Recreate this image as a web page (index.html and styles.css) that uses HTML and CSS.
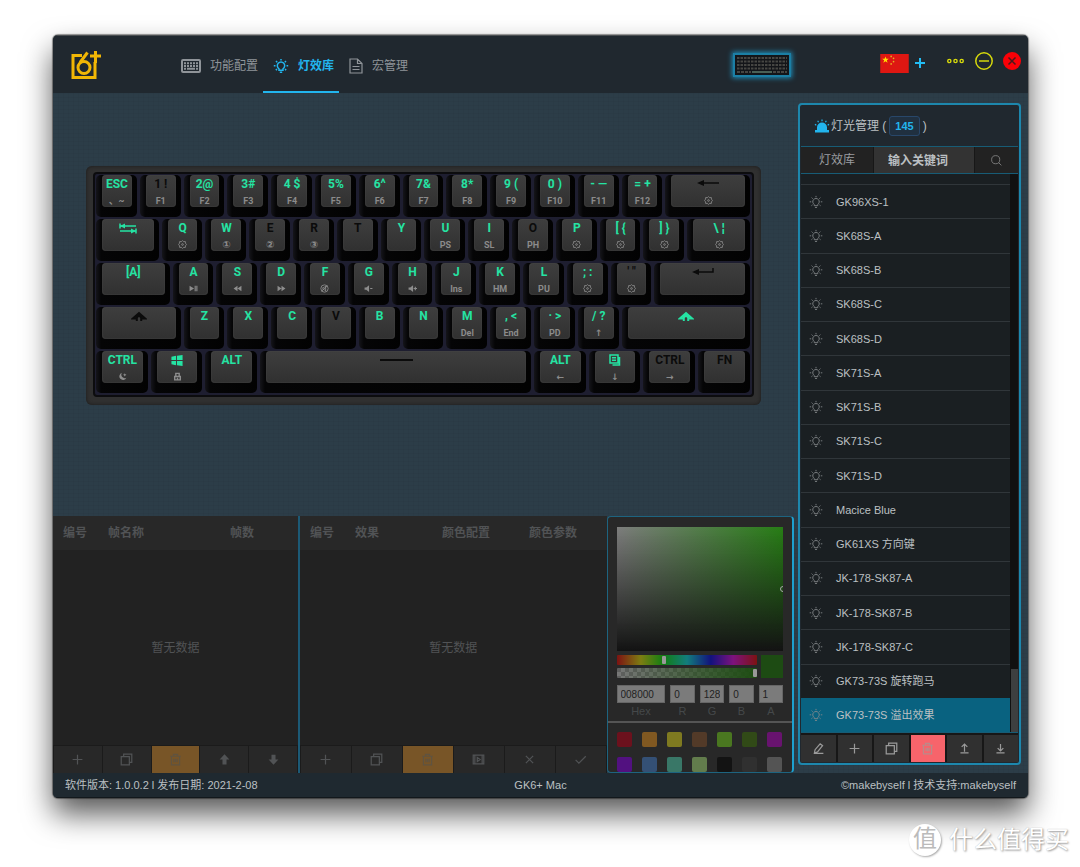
FILE: index.html
```html
<!DOCTYPE html>
<html lang="zh-CN">
<head>
<meta charset="utf-8">
<title>GK6+ Mac</title>
<link rel="stylesheet" href="styles.css">
</head>
<body>
<svg class="defs" aria-hidden="true">
  <symbol id="bulb" viewBox="0 0 16 16"><path d="M6 12.200v-1.400a3.700 3.700 0 1 1 4 0v1.400zM6.800 14.200h2.400M8 1v1.600M3 3l1.200 1.200M13 3l-1.200 1.200M.8 7.800h1.700M13.500 7.800h1.700M2.800 12.200l1.200-1M13.200 12.200l-1.200-1"/></symbol>
  <symbol id="plus" viewBox="0 0 16 16"><path d="M8 2v12M2 8h12"/></symbol>
  <symbol id="copy" viewBox="0 0 16 16"><path d="M1.500 4.500h10v10h-10zM4.500 4V1.500h10v10h-2.500"/></symbol>
  <symbol id="trash" viewBox="0 0 16 16"><path d="M1.500 4h13M5.500 4V1.800h5V4M3 4v10.500h10V4M6 7v4.500M8 7v4.500M10 7v4.500"/></symbol>
  <symbol id="gear" viewBox="0 0 16 16"><path d="M8 1l2 2 3-.3.300 3L15 8l-1.700 2.300-.3 3-3-.3-2 2-2-2-3 .3-.3-3L1 8l1.700-2.300.3-3 3 .3z"/><circle cx="8" cy="8" r="1.500"/></symbol>
  <symbol id="shift" viewBox="0 0 16 12"><path d="M5 8H1.800L8 2.500 14.200 8H11M5.800 10.500V7L8 5l2.200 2v3.500"/></symbol>
</svg>

<div class="window">
  <header class="topbar">
    <svg class="logo" viewBox="0 0 30 30" aria-label="GK6+"><path d="M11 5.500H2v22h22V12M24.500 1v12M19 6h11" /><path d="M16.500 2.500L9 12.500"/><circle cx="13" cy="17.500" r="6"/></svg>
    <nav class="tabs">
      <a href="#config"><svg class="kb-ico" viewBox="0 0 20 14"><rect x="1" y="1" width="18" height="12" rx="1"/><path d="M3 4.200h14M3 7h14" stroke-dasharray="2 1"/><path d="M3 9.800h2M6 9.800h8M15 9.800h2"/></svg><span>功能配置</span></a>
      <a href="#lights" class="active"><svg class="bulb-ico"><use href="#bulb"/></svg><span>灯效库</span></a>
      <a href="#macro"><svg class="doc-ico" viewBox="0 0 14 16"><path d="M1 1h7.500L13 5.500V15H1zM8.500 1v4.500H13M3.500 8.500h7M3.500 11.500h7"/></svg><span>宏管理</span></a>
    </nav>
    <button class="device" aria-label="键盘"><svg viewBox="0 0 54 20"><rect width="54" height="20" fill="#131519"/><path d="M2 3h50M2 6.500h50M2 10h50M2 13.500h50" stroke="#464643" stroke-width="2.200" stroke-dasharray="2.500 1"/><path d="M2 17h14M38 17h14" stroke="#464643" stroke-width="2" stroke-dasharray="3 1"/><path d="M17 17h20" stroke="#4a6055" stroke-width="2"/></svg></button>
    <div class="lang">
      <svg class="flag" viewBox="0 0 30 20" aria-label="中国"><rect width="30" height="20" fill="#de1712"/><path fill="#ffde00" d="M5.500 2.500l.9 2.500H9L6.900 6.600l.8 2.500-2.200-1.500-2.200 1.500.8-2.500L2 5h2.600z"/><g fill="#e8b020"><circle cx="11.500" cy="2.500" r=".9"/><circle cx="14" cy="4.500" r=".9"/><circle cx="14" cy="8" r=".9"/><circle cx="11.500" cy="10.500" r=".9"/></g></svg>
      <button aria-label="添加"><svg viewBox="0 0 12 12"><path d="M6 1v10M1 6h10" stroke="#22bdf5" stroke-width="2"/></svg></button>
    </div>
    <div class="winctl">
      <button aria-label="更多"><svg class="dots" viewBox="0 0 20 8"><g fill="none" stroke="#d5d80c" stroke-width="1.500"><circle cx="3.500" cy="4" r="1.700"/><circle cx="10" cy="4" r="1.700"/><circle cx="16.500" cy="4" r="1.700"/></g></svg></button>
      <button aria-label="最小化"><svg viewBox="0 0 18 18"><g fill="none" stroke="#d5d80c" stroke-width="1.500"><circle cx="9" cy="9" r="8.200"/><path d="M4 9h10"/></g></svg></button>
      <button aria-label="关闭"><svg class="solid" viewBox="0 0 18 18"><circle cx="9" cy="9" r="9" fill="#fb0007"/><path d="M5.500 5.500l7 7M12.500 5.500l-7 7" stroke="#4a1a1c" stroke-width="1.500"/></svg></button>
    </div>
  </header>

  <main class="content">
    <section class="work">
      <div class="stage">
        <div class="keyboard"><div class="keys">
          <div class="key"><div class="cap"><b>ESC</b><small>、~</small></div></div>
          <div class="key off"><div class="cap"><b>1 !</b><small>F1</small></div></div>
          <div class="key"><div class="cap"><b>2@</b><small>F2</small></div></div>
          <div class="key"><div class="cap"><b>3#</b><small>F3</small></div></div>
          <div class="key"><div class="cap"><b>4 $</b><small>F4</small></div></div>
          <div class="key"><div class="cap"><b>5%</b><small>F5</small></div></div>
          <div class="key"><div class="cap"><b>6^</b><small>F6</small></div></div>
          <div class="key"><div class="cap"><b>7&amp;</b><small>F7</small></div></div>
          <div class="key"><div class="cap"><b>8*</b><small>F8</small></div></div>
          <div class="key"><div class="cap"><b>9 (</b><small>F9</small></div></div>
          <div class="key"><div class="cap"><b>0 )</b><small>F10</small></div></div>
          <div class="key"><div class="cap"><b>- —</b><small>F11</small></div></div>
          <div class="key"><div class="cap"><b>= +</b><small>F12</small></div></div>
          <div class="key u200 off"><div class="cap"><svg class="wide" viewBox="0 0 22 12"><path d="M4 5h18" /><path class="fill" d="M0 5l7-3v6z"/></svg><svg class="sub"><use href="#gear"/></svg></div></div>

          <div class="key u150"><div class="cap"><svg class="wide" viewBox="0 0 22 12"><path d="M3 4h16M3 9h16M3 1.500v5M19 6.500v5"/><path class="fill" d="M3 4l5-2.500v5zM19 9l-5-2.500v5z"/></svg></div></div>
          <div class="key"><div class="cap"><b>Q</b><svg class="sub"><use href="#gear"/></svg></div></div>
          <div class="key"><div class="cap"><b>W</b><small class="num">①</small></div></div>
          <div class="key off"><div class="cap"><b>E</b><small class="num">②</small></div></div>
          <div class="key off"><div class="cap"><b>R</b><small class="num">③</small></div></div>
          <div class="key off"><div class="cap"><b>T</b></div></div>
          <div class="key"><div class="cap"><b>Y</b></div></div>
          <div class="key"><div class="cap"><b>U</b><small>PS</small></div></div>
          <div class="key"><div class="cap"><b>I</b><small>SL</small></div></div>
          <div class="key off"><div class="cap"><b>O</b><small>PH</small></div></div>
          <div class="key"><div class="cap"><b>P</b><svg class="sub"><use href="#gear"/></svg></div></div>
          <div class="key"><div class="cap"><b>[ {</b><svg class="sub"><use href="#gear"/></svg></div></div>
          <div class="key"><div class="cap"><b>] }</b><svg class="sub"><use href="#gear"/></svg></div></div>
          <div class="key u150"><div class="cap"><b>\ ¦</b><svg class="sub"><use href="#gear"/></svg></div></div>

          <div class="key u175"><div class="cap"><b>[A]</b></div></div>
          <div class="key"><div class="cap"><b>A</b><svg class="sub solid" viewBox="0 0 16 16"><path d="M1 3l8 5-8 5zM10 3h2v10h-2zM13 3h2v10h-2z"/></svg></div></div>
          <div class="key"><div class="cap"><b>S</b><svg class="sub solid" viewBox="0 0 16 16"><path d="M8 3v10L1 8zM15 3v10L8 8z"/></svg></div></div>
          <div class="key"><div class="cap"><b>D</b><svg class="sub solid" viewBox="0 0 16 16"><path d="M1 3v10l7-5zM8 3v10l7-5z"/></svg></div></div>
          <div class="key"><div class="cap"><b>F</b><svg class="sub" viewBox="0 0 16 16"><circle cx="8" cy="8" r="6.500"/><path d="M5 6.500h2l3-3v9l-3-3H5zM3 13L13 3"/></svg></div></div>
          <div class="key"><div class="cap"><b>G</b><svg class="sub solid" viewBox="0 0 16 16"><path d="M1 6h3l5-4v12l-5-4H1zM11 7h4v2h-4z"/></svg></div></div>
          <div class="key"><div class="cap"><b>H</b><svg class="sub solid" viewBox="0 0 16 16"><path d="M1 6h3l5-4v12l-5-4H1zM10 7h2V5h2v2h2v2h-2v2h-2V9h-2z"/></svg></div></div>
          <div class="key"><div class="cap"><b>J</b><small>Ins</small></div></div>
          <div class="key"><div class="cap"><b>K</b><small>HM</small></div></div>
          <div class="key"><div class="cap"><b>L</b><small>PU</small></div></div>
          <div class="key"><div class="cap"><b>; :</b><svg class="sub"><use href="#gear"/></svg></div></div>
          <div class="key off"><div class="cap"><b>' "</b><svg class="sub"><use href="#gear"/></svg></div></div>
          <div class="key u225 off"><div class="cap"><svg class="wide" viewBox="0 0 22 12"><path d="M4 6h17V2" /><path class="fill" d="M0 6l7-3v6z"/></svg></div></div>

          <div class="key u200 off"><div class="cap"><svg class="shift"><use href="#shift"/></svg></div></div>
          <div class="key"><div class="cap"><b>Z</b></div></div>
          <div class="key"><div class="cap"><b>X</b></div></div>
          <div class="key"><div class="cap"><b>C</b></div></div>
          <div class="key off"><div class="cap"><b>V</b></div></div>
          <div class="key"><div class="cap"><b>B</b></div></div>
          <div class="key"><div class="cap"><b>N</b></div></div>
          <div class="key"><div class="cap"><b>M</b><small>Del</small></div></div>
          <div class="key"><div class="cap"><b>, &lt;</b><small>End</small></div></div>
          <div class="key"><div class="cap"><b>· &gt;</b><small>PD</small></div></div>
          <div class="key"><div class="cap"><b>/ ?</b><small>↑</small></div></div>
          <div class="key u300"><div class="cap"><svg class="shift"><use href="#shift"/></svg></div></div>

          <div class="key u125"><div class="cap"><b>CTRL</b><svg class="sub solid" viewBox="0 0 16 16"><path d="M7 1.500a6.500 6.500 0 1 0 8 8.500A6 6 0 0 1 7 1.500zM12 2l1 2 2 1-2 1-1 2-1-2-2-1 2-1z"/></svg></div></div>
          <div class="key u125"><div class="cap"><svg class="shift solid" viewBox="0 0 16 14"><path d="M2 3l5-1v4.500H2zM8 2l6-1v5.500H8zM2 7.500h5V12l-5-1zM8 7.500h6V13l-6-1z"/></svg><svg class="sub" viewBox="0 0 16 16"><path d="M3 8h10v6H3zM5 8V2.500h6V8M8 10v3" stroke-width="2.500"/></svg></div></div>
          <div class="key u125"><div class="cap"><b>ALT</b></div></div>
          <div class="key u625 off"><div class="cap"><span class="bar"></span></div></div>
          <div class="key u125"><div class="cap"><b>ALT</b><small>←</small></div></div>
          <div class="key u125"><div class="cap"><svg class="menu" viewBox="0 0 12 12"><path d="M1 1h8v8H1zM3 3.700h4M3 6.300h4M10.500 3v8H3.500"/></svg><small>↓</small></div></div>
          <div class="key u125 off"><div class="cap"><b>CTRL</b><small>→</small></div></div>
          <div class="key u125 off"><div class="cap"><b>FN</b></div></div>
        </div></div>
      </div>

      <div class="editors">
        <section class="pane frames">
          <table><thead><tr><th class="no">编号</th><th class="name">帧名称</th><th>帧数</th></tr></thead></table>
          <p class="empty">暂无数据</p>
          <div class="tools">
            <button aria-label="添加"><svg><use href="#plus"/></svg></button>
            <button aria-label="复制"><svg><use href="#copy"/></svg></button>
            <button class="warn" aria-label="删除"><svg><use href="#trash"/></svg></button>
            <button aria-label="上移"><svg class="solid" viewBox="0 0 16 16"><path d="M8 1.500L14 8h-3.500v6h-5V8H2z"/></svg></button>
            <button aria-label="下移"><svg class="solid" viewBox="0 0 16 16"><path d="M8 14.500L14 8h-3.500V2h-5v6H2z"/></svg></button>
          </div>
        </section>
        <section class="pane effects">
          <table><thead><tr><th class="no">编号</th><th class="fx">效果</th><th class="fx">颜色配置</th><th>颜色参数</th></tr></thead></table>
          <p class="empty">暂无数据</p>
          <div class="tools">
            <button aria-label="添加"><svg><use href="#plus"/></svg></button>
            <button aria-label="复制"><svg><use href="#copy"/></svg></button>
            <button class="warn" aria-label="删除"><svg><use href="#trash"/></svg></button>
            <button aria-label="预览"><svg viewBox="0 0 16 16"><path d="M1.500 2.500h13v11h-13zM3.500 2.500v11M12.500 2.500v11M6.500 5.500l3.500 2.500-3.500 2.500z"/></svg></button>
            <button aria-label="取消"><svg viewBox="0 0 16 16"><path d="M3.500 3.500l9 9M12.500 3.500l-9 9"/></svg></button>
            <button aria-label="确定"><svg viewBox="0 0 16 16"><path d="M2 8.500l4 4 8.500-8.500"/></svg></button>
          </div>
        </section>
        <section class="picker">
          <div class="mixer">
            <div class="shade"><span class="spot"></span></div>
            <div class="sliders">
              <div class="bars">
                <input class="hue" type="range" min="0" max="360" value="120" aria-label="色相">
                <input class="alpha" type="range" min="0" max="100" value="100" aria-label="透明度">
              </div>
              <span class="current"></span>
            </div>
            <div class="fields">
              <label><input value="008000">Hex</label>
              <label><input value="0">R</label>
              <label><input value="128">G</label>
              <label><input value="0">B</label>
              <label><input value="1">A</label>
            </div>
          </div>
          <div class="swatches">
            <button class="c1" aria-label="红"></button><button class="c2" aria-label="橙"></button><button class="c3" aria-label="黄"></button><button class="c4" aria-label="棕"></button><button class="c5" aria-label="绿"></button><button class="c6" aria-label="深绿"></button><button class="c7" aria-label="紫"></button>
            <button class="c8" aria-label="蓝紫"></button><button class="c9" aria-label="蓝"></button><button class="c10" aria-label="青"></button><button class="c11" aria-label="浅绿"></button><button class="c12" aria-label="黑"></button><button class="c13" aria-label="深灰"></button><button class="c14" aria-label="灰"></button>
          </div>
        </section>
      </div>
    </section>

    <aside class="library">
      <h2><svg class="siren" viewBox="0 0 16 14"><path d="M3 11V8.500a5 5 0 0 1 10 0V11zM1 11h14V13.500H1z"/><path d="M2.300 6.200L1 5.200M4.500 3.200l-.8-1.500M8 2.200V.5M11.500 3.200l.8-1.500M13.700 6.200l1.300-1" stroke-width="1.200"/></svg>灯光管理 (<span class="count">145</span>)</h2>
      <div class="filter">
        <span class="cat">灯效库</span>
        <input aria-label="搜索" placeholder="输入关键词">
        <button aria-label="搜索"><svg viewBox="0 0 16 16"><circle cx="7" cy="7" r="5"/><path d="M10.700 10.700L14 14"/></svg></button>
      </div>
      <div class="scroller">
        <ul>
          <li><svg><use href="#bulb"/></svg>GK96XS-1</li>
          <li><svg><use href="#bulb"/></svg>SK68S-A</li>
          <li><svg><use href="#bulb"/></svg>SK68S-B</li>
          <li><svg><use href="#bulb"/></svg>SK68S-C</li>
          <li><svg><use href="#bulb"/></svg>SK68S-D</li>
          <li><svg><use href="#bulb"/></svg>SK71S-A</li>
          <li><svg><use href="#bulb"/></svg>SK71S-B</li>
          <li><svg><use href="#bulb"/></svg>SK71S-C</li>
          <li><svg><use href="#bulb"/></svg>SK71S-D</li>
          <li><svg><use href="#bulb"/></svg>Macice Blue</li>
          <li><svg><use href="#bulb"/></svg>GK61XS 方向键</li>
          <li><svg><use href="#bulb"/></svg>JK-178-SK87-A</li>
          <li><svg><use href="#bulb"/></svg>JK-178-SK87-B</li>
          <li><svg><use href="#bulb"/></svg>JK-178-SK87-C</li>
          <li><svg><use href="#bulb"/></svg>GK73-73S 旋转跑马</li>
          <li class="selected"><svg><use href="#bulb"/></svg>GK73-73S 溢出效果</li>
        </ul>
        <div class="track"><span class="thumb"></span></div>
      </div>
      <div class="tools">
        <button aria-label="编辑"><svg viewBox="0 0 16 16"><path d="M3 13.500l.8-4L10 2.200l3 2.300-6 7.500zM3 14h11"/></svg></button>
        <button aria-label="添加"><svg><use href="#plus"/></svg></button>
        <button aria-label="复制"><svg><use href="#copy"/></svg></button>
        <button class="danger" aria-label="删除"><svg><use href="#trash"/></svg></button>
        <button aria-label="导出"><svg viewBox="0 0 16 16"><path d="M8 12V3M4.500 6L8 2.500 11.500 6M3 13.500h10"/></svg></button>
        <button aria-label="导入"><svg viewBox="0 0 16 16"><path d="M8 2.500v8M4.500 7.500L8 11l3.500-3.500M3 13.500h10"/></svg></button>
      </div>
    </aside>
  </main>

  <footer class="status">
    <span>软件版本: 1.0.0.2 l 发布日期: 2021-2-08</span>
    <span>GK6+ Mac</span>
    <span>©makebyself l 技术支持:makebyself</span>
  </footer>
</div>
<div class="watermark"><span class="seal">值</span>什么值得买</div>
</body>
</html>
```
FILE: styles.css
```css
* { box-sizing: border-box; }
body {
  margin: 0;
  min-height: 100vh;
  padding: 35px 52px 69px 53px;
  display: flex;
  position: relative;
  overflow: hidden;
  background: #fff;
  font: 12px/16px "Liberation Sans", "Noto Sans CJK SC", sans-serif;
  color: #bcc0c3;
}
svg { fill: none; stroke: currentColor; display: block; flex: none; }
.solid { fill: currentColor; stroke: none; }
button { border: 0; padding: 0; background: none; color: inherit; display: flex; align-items: center; justify-content: center; }
.defs { position: absolute; width: 0; height: 0; }

.window {
  flex: 1;
  min-width: 0;
  display: flex;
  flex-direction: column;
  border-radius: 5px;
  overflow: hidden;
  background:
    repeating-linear-gradient(0deg, rgba(0,0,0,.03) 0 1px, transparent 1px 4px),
    repeating-linear-gradient(90deg, rgba(0,0,0,.03) 0 1px, transparent 1px 5px),
    #2c3d48;
  box-shadow: 0 0 1px 1px rgba(0,0,0,.4), 0 16px 30px rgba(0,0,0,.66);
}

/* top bar */
.topbar { height: 58px; padding: 0 7px 0 18px; display: flex; background: #20282f; border-top: 1px solid #4a4e51; }
.topbar button svg { width: 18px; height: 18px; }
.logo { width: 30px; height: 30px; margin-top: 14px; color: #f2b705; stroke-width: 3; }
.tabs { display: flex; margin-left: 70px; flex: 1; }
.tabs a { display: flex; align-items: center; gap: 9px; padding: 4px 5px 0 10px; color: #8f9499; text-decoration: none; border-bottom: 2px solid transparent; }
.tabs a.active { color: #22b5ee; border-color: #22b5ee; font-weight: bold; }
.kb-ico { width: 20px; height: 14px; stroke-width: 2; }
.bulb-ico { width: 16px; height: 16px; stroke-width: 1.500; }
.doc-ico { width: 14px; height: 16px; stroke-width: 1.200; }
.device { width: 58px; height: 24px; margin: 17px 89px 0 0; border: 2px solid #1b7fa5; box-shadow: 0 0 5px 1px #1f8db8; }
.topbar .device svg { width: 54px; height: 20px; stroke: none; }
.lang { display: flex; align-items: center; height: 20px; margin-top: 17px; gap: 5px; }
.flag { width: 29px; height: 19px; stroke: none; }
.topbar .lang button svg { width: 12px; height: 12px; }
.winctl { display: flex; align-items: center; height: 18px; margin: 16px 0 0 20px; gap: 10px; }
.topbar .dots { width: 19px; height: 8px; }

/* layout */
.content { flex: 1; display: flex; gap: 4px; padding-right: 7px; min-height: 0; }
.work { flex: 1; min-width: 0; display: flex; flex-direction: column; }
.stage { flex: 1; padding: 73px 33px 0; }

/* keyboard */
.keyboard { padding: 6px 7px 8px; border-radius: 6px; background: #303030; box-shadow: inset 0 0 3px 1px #222; }
.keys {
  display: grid;
  grid-template-columns: repeat(60, 1fr);
  grid-template-rows: repeat(5, 42px);
  row-gap: 2px;
  padding: 1px 0 2px;
  border: 2px solid #0c0c0e;
  border-radius: 4px;
  background: #1e1e30;
}
.key { grid-column: span 4; margin: 0 2px 0 1px; padding: 0 5px 10px 6px; border-radius: 5px; background: linear-gradient(90deg, #15151a, #050506 5px, #020202); color: #25e3a3; }
.key.off { color: #0b0b0b; }
.u125 { grid-column: span 5; }
.u150 { grid-column: span 6; }
.u175 { grid-column: span 7; }
.u200 { grid-column: span 8; }
.u225 { grid-column: span 9; }
.u300 { grid-column: span 12; }
.u625 { grid-column: span 25; }
.cap { height: 32px; padding-top: 3px; border-radius: 4px; display: flex; flex-direction: column; align-items: center; justify-content: space-between; background: linear-gradient(#3e3e3e, #363636 60%, #303030); box-shadow: inset 0 0 2px #484848; white-space: nowrap; }
.cap b { font: bold 12px/13px Roboto, sans-serif; }
.cap small { padding-bottom: 1px; font: bold 9px/10px Roboto, "DejaVu Sans", sans-serif; color: #8b8b8b; }
.cap .num { font-family: "DejaVu Sans", sans-serif; font-size: 10px; }
.cap .sub { width: 9px; height: 9px; margin-bottom: 2px; color: #8d8d8d; stroke-width: 1.500; }
.cap .sub.solid { fill: #8d8d8d; }
.cap .wide { width: 22px; height: 12px; stroke-width: 1.500; }
.wide .fill { fill: currentColor; stroke: none; }
.cap .shift { width: 16px; height: 13px; stroke-width: 2; }
.cap .menu { width: 12px; height: 12px; stroke-width: 1.500; }
.bar { width: 33px; height: 2px; margin-top: 5px; background: #0b0b0b; }

/* editors */
.editors { display: flex; height: 257px; }
.pane { display: flex; flex-direction: column; background: #222; color: #515355; }
.frames { flex: 247; border-right: 2px solid #1c5a76; }
.effects { flex: 309; }
table { width: 100%; table-layout: fixed; border-collapse: collapse; background: #282828; }
th { height: 34px; padding: 0; text-align: left; font-weight: bold; }
th.no { width: 55px; padding-left: 10px; }
th.name { width: 122px; }
th.fx { width: 87px; }
.empty { flex: 1; display: flex; align-items: center; justify-content: center; margin: 0; }
.tools { display: flex; height: 28px; border: solid #1b1b1b; border-width: 1px 1px 0; background: #1b1b1b; gap: 1px; }
.tools button { flex: 1; background: #282828; }
.tools svg { width: 13px; height: 13px; stroke-width: 1.500; }
.tools .solid { stroke-width: 0; }
.tools .warn { background: #785527; color: #5f5340; }

/* colour picker */
.picker { flex: 186; border: 1px solid #1d6480; border-right: 2px solid #1da0cf; border-radius: 4px; background: #282828; }
.mixer { padding: 10px 9px 2px; border-bottom: 2px solid #555; }
.shade { height: 124px; display: flex; justify-content: flex-end; align-items: center; overflow: hidden; background: linear-gradient(transparent, #131313), linear-gradient(90deg, #7d7d7d, #277d15); }
.spot { width: 6px; height: 6px; margin-right: -3px; border: 1px solid #aaa; border-radius: 50%; }
.sliders { display: flex; gap: 4px; margin-top: 4px; }
.bars { flex: 1; display: flex; flex-direction: column; gap: 3px; }
.bars input { appearance: none; display: block; width: 100%; height: 10px; margin: 0; border-radius: 1px; }
.bars input::-webkit-slider-thumb { appearance: none; width: 4px; height: 8px; border-radius: 1px; background: #999; }
.hue { background: linear-gradient(90deg, #7d1212, #7d7d12 17%, #127d12 33%, #127d7d 50%, #12127d 67%, #7d127d 83%, #7d1212); }
.alpha { background: linear-gradient(90deg, transparent, #1d4d12), repeating-conic-gradient(#777 0 25%, #606060 0 50%) 0 0 / 8px 8px; }
.current { width: 22px; height: 23px; background: #1d4b13; }
.fields { display: flex; gap: 5px; margin-top: 7px; }
.fields label { flex: 1; display: flex; flex-direction: column; align-items: center; font-size: 11px; line-height: 16px; color: #45484a; }
.fields label:first-child { flex: 2; }
.fields input { width: 100%; height: 18px; padding: 0 3px; border: 1px solid #666; background: #7b7b7b; color: #222; font: 10px "Liberation Sans", sans-serif; }
.swatches { display: grid; grid-template-columns: repeat(7, 15px); justify-content: space-between; row-gap: 10px; padding: 9px 10px 0 9px; }
.swatches button { height: 15px; border-radius: 2px; }
.c1 { background: #6c111d; } .c2 { background: #805821; } .c3 { background: #7f7a20; } .c4 { background: #523a28; }
.c5 { background: #4a7720; } .c6 { background: #314a17; } .c7 { background: #68136f; } .c8 { background: #521180; }
.c9 { background: #345075; } .c10 { background: #397767; } .c11 { background: #627c4c; } .c12 { background: #131313; }
.c13 { background: #303030; } .c14 { background: #545454; }

/* library */
.library { width: 223px; margin: 10px 0 8px; padding: 1px; display: flex; flex-direction: column; border: 2px solid #1d87ad; border-radius: 4px; background: #20282f; }
.library h2 { height: 40px; margin: 0; padding-left: 13px; display: flex; align-items: center; font-size: 12px; font-weight: normal; }
.siren { width: 16px; height: 14px; margin-right: 1px; color: #22b5ee; fill: #22b5ee; stroke-width: 0; }
.count { margin: 0 3px; padding: 1px 5px; border: 1px solid #28476a; border-radius: 3px; background: #203040; color: #22b5ee; font-size: 11px; font-weight: bold; }
.filter { display: flex; height: 28px; border: solid #175c76; border-width: 1px 0; background: #171717; gap: 1px; }
.filter > * { background: #222; }
.cat { width: 72px; line-height: 27px; text-align: center; color: #9a9da0; }
.filter input { flex: 1; min-width: 0; padding: 1px 14px 0; border: 0; background: #333; font: inherit; }
.filter input::placeholder { color: #bcc0c3; opacity: 1; font-weight: bold; }
.filter button { width: 43px; }
.filter svg { width: 13px; height: 13px; color: #898989; }
.scroller { flex: 1; display: flex; }
ul { flex: 1; margin: 0; padding: 10px 0 0; list-style: none; display: flex; flex-direction: column; background: #1a1f22; font-size: 11px; }
li { flex: 1; display: flex; align-items: center; padding-left: 8px; gap: 13px; border-top: 1px solid #30363a; }
li svg { width: 14px; height: 14px; color: #85898b; }
li.selected { background: #096280; border-color: #096280; }
.track { width: 8px; padding-left: 1px; display: flex; align-items: flex-end; background: #111; }
.thumb { width: 7px; height: 63px; background: #3d3f40; }
.library .tools { height: 30px; padding: 2px 0 0; border: solid #171717; border-width: 1px 0 0; border-top-color: #175c76; background: #171717; gap: 2px; }
.library .tools button { background: #303030; color: #9a9a9a; }
.library .tools .danger { background: #f7646b; color: #b98a8a; }

/* footer */
.status { height: 25px; padding: 0 12px; display: grid; grid-template-columns: 1fr auto 1fr; align-items: center; background: #1f2930; border-bottom: 1px solid #12181c; font-size: 11px; }
.status span:last-child { text-align: right; }

.watermark { position: absolute; right: 11px; bottom: 10px; display: flex; align-items: center; gap: 8px; font-size: 24px; line-height: 34px; color: #fff; text-shadow: 1px 1px 2px #999, 0 0 1px #bbb; }
.seal { width: 32px; height: 32px; line-height: 30px; border-radius: 50%; background: #fff; text-align: center; color: #bbb; text-shadow: none; box-shadow: 1px 1px 2px #aaa; }
```
